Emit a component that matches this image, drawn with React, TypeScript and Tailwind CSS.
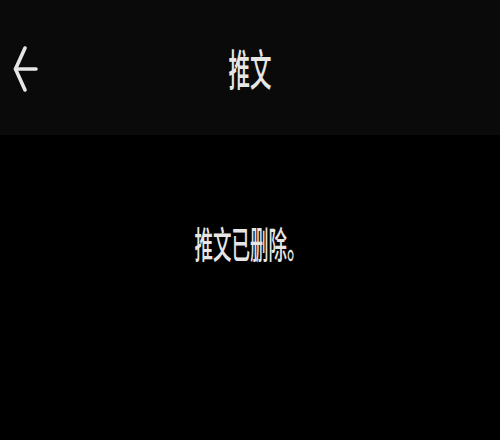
export default function App() {
  return (
    <div className="w-[500px] h-[440px] bg-black flex flex-col overflow-hidden">
      <div className="h-[135px] bg-[#0a0a0a] relative flex items-center justify-center">
        <svg
          className="absolute left-0 top-0"
          width="60"
          height="135"
          viewBox="0 0 60 135"
          fill="none"
          stroke="#e6e6e6"
          strokeWidth="3.6"
          strokeLinecap="round"
          strokeLinejoin="round"
        >
          <path d="M25 48 L15.5 69 L25 90" />
          <path d="M15.5 69 H36" />
        </svg>
        <span
          className="text-[43px] leading-none text-[#e6e6e6] font-medium scale-x-50 inline-block"
          style={{ fontFamily: '"Noto Sans CJK SC", sans-serif' }}
        >
          推文
        </span>
      </div>
      <div className="pt-[90px] flex justify-center">
        <span
          className="text-[37px] leading-none text-[#e6e6e6] font-medium scale-x-50 inline-block"
          style={{ fontFamily: '"Noto Sans CJK SC", sans-serif' }}
        >
          推文已删除。
        </span>
      </div>
    </div>
  );
}
